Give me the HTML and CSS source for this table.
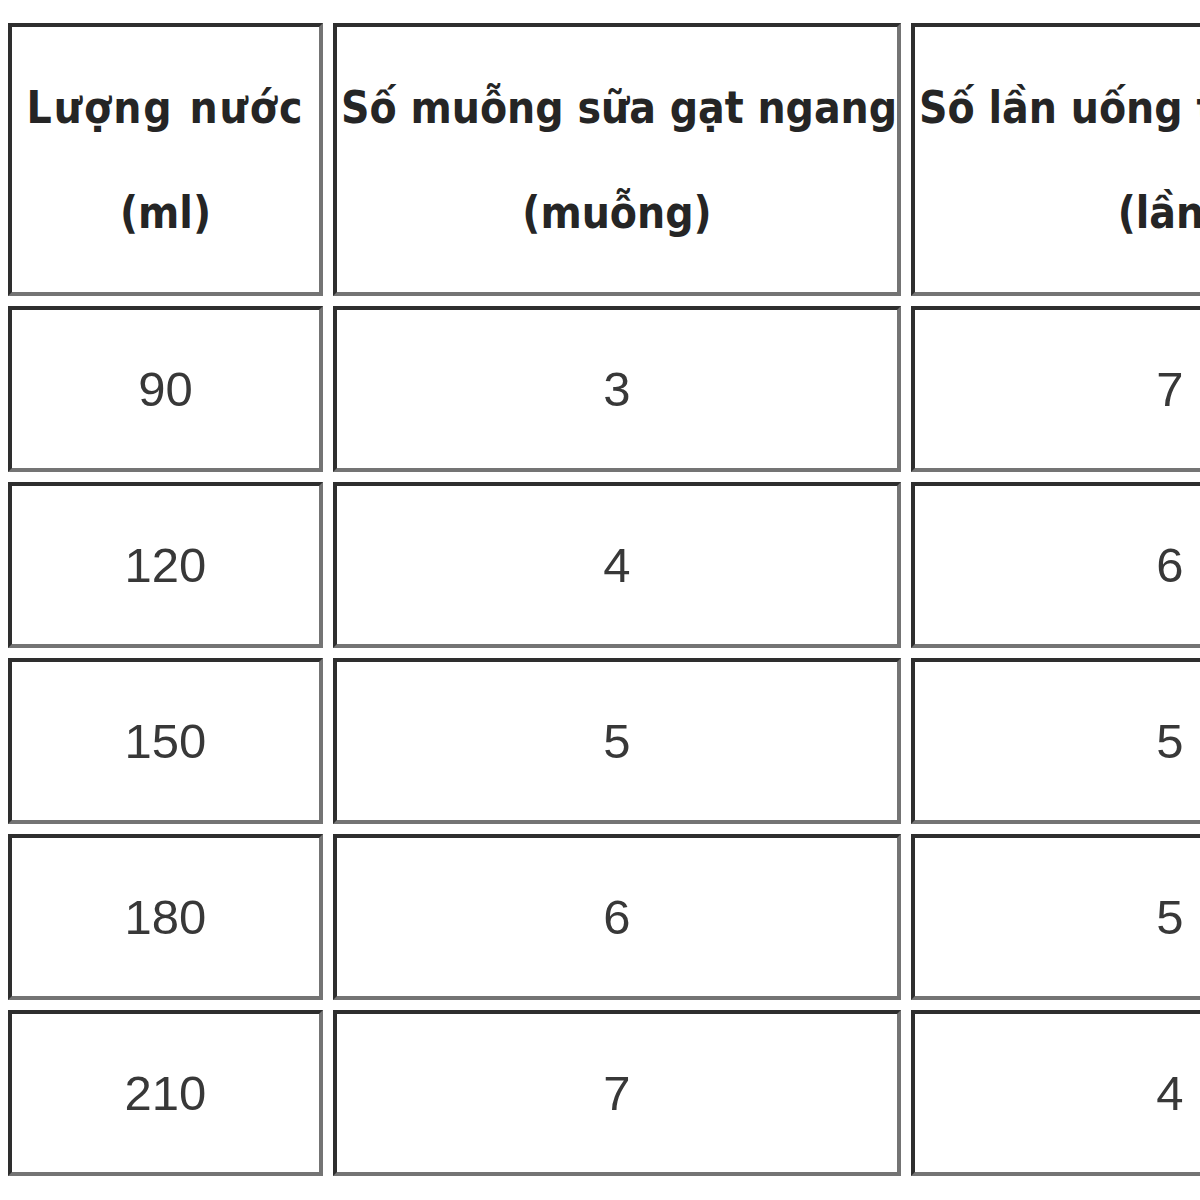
FILE: index.html
```html
<!DOCTYPE html>
<html lang="vi">
<head>
<meta charset="utf-8">
<title>Bảng pha sữa</title>
<link rel="stylesheet" href="styles.css">
</head>
<body>
<table class="milk">
  <colgroup>
    <col class="c1">
    <col class="c2">
    <col class="c3">
  </colgroup>
  <tr class="head-row">
    <th><span class="hl wide">Lượng nước</span><span class="hl">(ml)</span></th>
    <th><span class="hl">Số muỗng sữa gạt ngang</span><span class="hl">(muỗng)</span></th>
    <th><span class="hl">Số lần uống trong ngày</span><span class="hl">(lần)</span></th>
  </tr>
  <tr class="row"><td>90</td><td>3</td><td>7</td></tr>
  <tr class="row"><td>120</td><td>4</td><td>6</td></tr>
  <tr class="row"><td>150</td><td>5</td><td>5</td></tr>
  <tr class="row"><td>180</td><td>6</td><td>5</td></tr>
  <tr class="row"><td>210</td><td>7</td><td>4</td></tr>
</table>
</body>
</html>
```

FILE: styles.css
```css
html, body {
  margin: 0;
  padding: 0;
  background: #ffffff;
  overflow: hidden;
}

.milk {
  margin: 13px 0 0 -2px;
  border-collapse: separate;
  border-spacing: 10px;
  table-layout: fixed;
  width: 1441px;
}

.c1 { width: 315px; }
.c2 { width: 568px; }
.c3 { width: 518px; }

.milk th,
.milk td {
  box-sizing: border-box;
  border-style: solid;
  border-width: 4px;
  border-color: #2e2e2e #747474 #747474 #2e2e2e;
  padding: 0 4px;
  text-align: center;
  vertical-align: middle;
  white-space: nowrap;
  overflow: hidden;
}

.head-row { height: 273px; }
.row { height: 166px; }

.milk th {
  font-family: "DejaVu Sans Condensed", "DejaVu Sans", sans-serif;
  font-weight: bold;
  font-size: 44px;
  color: #252525;
}

.hl {
  display: block;
  line-height: 105px;
}

.wide {
  letter-spacing: 2px;
}

.milk td {
  font-family: "Liberation Sans", Arial, sans-serif;
  font-size: 49px;
  color: #383838;
}
```
